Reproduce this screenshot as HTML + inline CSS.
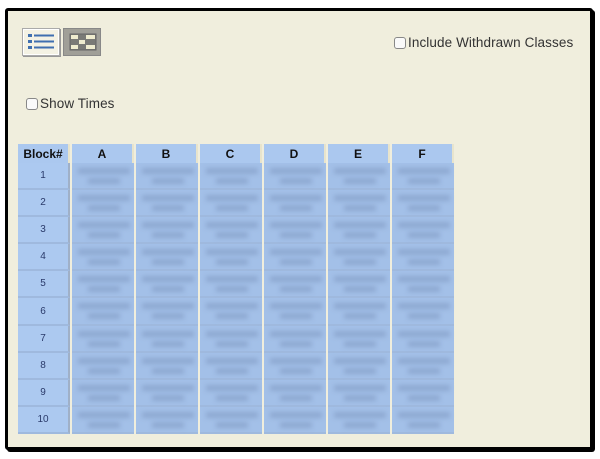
<!DOCTYPE html>
<html><head><meta charset="utf-8"><style>
html,body{margin:0;padding:0;background:#fff;width:600px;height:459px;overflow:hidden;font-family:"Liberation Sans",sans-serif}
.frame{position:absolute;left:5px;top:8px;width:582px;height:436px;background:#f0eedd;border:3px solid #000;border-radius:3px;box-shadow:2px 2px 0 #000}
.btn{position:absolute;top:28px;width:38px;height:28px;box-sizing:border-box}
.b1{left:22px;background:#f4f2e4;border:1px solid #aaa;box-shadow:inset 0 0 0 1px #fff,1px 1px 0 #999}
.b2{left:63px;background:#a09f98;border:1px solid #888}
.cb{position:absolute;width:10px;height:10px;border:1px solid #888;border-radius:3px;background:#fafafa}
.lbl{position:absolute;font-size:13.5px;color:#333;letter-spacing:0.1px}
table{position:absolute;left:18px;top:144px;border-collapse:separate;border-spacing:2px 0;table-layout:fixed;margin-left:-2px}
th{background:#abc8ef;height:19px;font-size:12px;font-weight:bold;color:#111;padding:0;border-right:2px solid #e8e4cc}
td{height:25.1px;padding:0;border-bottom:2px solid #9fb9de;background:#a8c5ec;font-size:10px;color:#2a3a6a;text-align:center;position:relative}
td.n{background:#acc9f0;border-right:2px solid #9fb0c8}
td.d{background:#a3c0e8}
td.d::before{content:"";position:absolute;left:6px;right:4px;top:5px;height:6px;background:#8ea9d2;filter:blur(2.5px)}
td.d::after{content:"";position:absolute;left:16px;right:14px;top:15px;height:6px;background:#8ea9d2;filter:blur(2.5px)}
</style></head><body>
<div class="frame"></div>
<div class="btn b1"><svg width="36" height="26" viewBox="0 0 36 26"><g fill="#3f6fb0"><rect x="5" y="5" width="4" height="3"/><rect x="5" y="11" width="4" height="3"/><rect x="5" y="17" width="4" height="3"/><rect x="11" y="5.5" width="20" height="2"/><rect x="11" y="11.5" width="20" height="2"/><rect x="11" y="17.5" width="20" height="2"/></g></svg></div>
<div class="btn b2"><svg width="36" height="26" viewBox="0 0 36 26"><rect x="6" y="5" width="26" height="16" fill="#7a7a76" stroke="#666"/><g fill="#efeccf"><rect x="7" y="6" width="7" height="4"/><rect x="22" y="6" width="9" height="4"/><rect x="15" y="11" width="6" height="4"/><rect x="7" y="16" width="7" height="4"/><rect x="22" y="16" width="9" height="4"/></g></svg></div>
<div class="cb" style="left:394px;top:37px"></div><div class="lbl" style="left:408px;top:35px">Include Withdrawn Classes</div>
<div class="cb" style="left:26px;top:98px"></div><div class="lbl" style="left:40px;top:96px">Show Times</div>
<table>
<colgroup><col style="width:52px"><col style="width:62px"><col style="width:62px"><col style="width:62px"><col style="width:62px"><col style="width:62px"><col style="width:62px"></colgroup>
<tr><th>Block#</th><th>A</th><th>B</th><th>C</th><th>D</th><th>E</th><th>F</th></tr>
<tr><td class="n">1</td><td class="d"></td><td class="d"></td><td class="d"></td><td class="d"></td><td class="d"></td><td class="d"></td></tr>
<tr><td class="n">2</td><td class="d"></td><td class="d"></td><td class="d"></td><td class="d"></td><td class="d"></td><td class="d"></td></tr>
<tr><td class="n">3</td><td class="d"></td><td class="d"></td><td class="d"></td><td class="d"></td><td class="d"></td><td class="d"></td></tr>
<tr><td class="n">4</td><td class="d"></td><td class="d"></td><td class="d"></td><td class="d"></td><td class="d"></td><td class="d"></td></tr>
<tr><td class="n">5</td><td class="d"></td><td class="d"></td><td class="d"></td><td class="d"></td><td class="d"></td><td class="d"></td></tr>
<tr><td class="n">6</td><td class="d"></td><td class="d"></td><td class="d"></td><td class="d"></td><td class="d"></td><td class="d"></td></tr>
<tr><td class="n">7</td><td class="d"></td><td class="d"></td><td class="d"></td><td class="d"></td><td class="d"></td><td class="d"></td></tr>
<tr><td class="n">8</td><td class="d"></td><td class="d"></td><td class="d"></td><td class="d"></td><td class="d"></td><td class="d"></td></tr>
<tr><td class="n">9</td><td class="d"></td><td class="d"></td><td class="d"></td><td class="d"></td><td class="d"></td><td class="d"></td></tr>
<tr><td class="n">10</td><td class="d"></td><td class="d"></td><td class="d"></td><td class="d"></td><td class="d"></td><td class="d"></td></tr>
</table>
</body></html>
